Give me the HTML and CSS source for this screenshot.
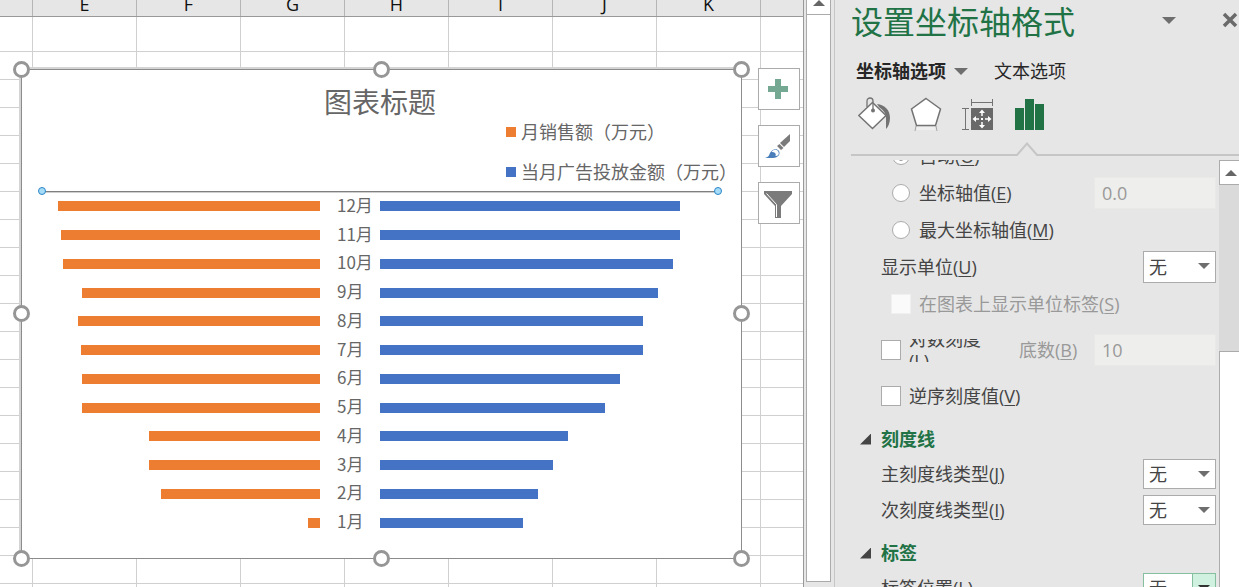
FILE: index.html
```html
<!DOCTYPE html>
<html lang="zh-CN">
<head>
<meta charset="utf-8">
<title>设置坐标轴格式</title>
<link rel="stylesheet" href="styles.css">
</head>
<body>
<div class="app">
  <main class="sheet">
    <div class="columns">
      <span class="col col-first"></span><span class="col">E</span><span class="col">F</span><span class="col">G</span><span class="col">H</span><span class="col">I</span><span class="col">J</span><span class="col">K</span><span class="col-rest"></span>
    </div>
    <div class="first-row"></div>
    <div class="rows"></div>

    <section class="chart">
      <h2 class="chart-title">图表标题</h2>
      <ul class="legend">
        <li><i class="swatch orange"></i>月销售额（万元）</li>
        <li><i class="swatch blue"></i>当月广告投放金额（万元）</li>
      </ul>
      <div class="plot">
        <div class="axis-line"></div>
        <div class="bar-row"><div class="left"><i class="bar orange" style="width:94.2%"></i></div><span>12月</span><div><i class="bar blue" style="width:88.8%"></i></div></div>
        <div class="bar-row"><div class="left"><i class="bar orange" style="width:93.2%"></i></div><span>11月</span><div><i class="bar blue" style="width:88.8%"></i></div></div>
        <div class="bar-row"><div class="left"><i class="bar orange" style="width:92.4%"></i></div><span>10月</span><div><i class="bar blue" style="width:86.7%"></i></div></div>
        <div class="bar-row"><div class="left"><i class="bar orange" style="width:85.6%"></i></div><span>9月</span><div><i class="bar blue" style="width:82.2%"></i></div></div>
        <div class="bar-row"><div class="left"><i class="bar orange" style="width:87%"></i></div><span>8月</span><div><i class="bar blue" style="width:77.8%"></i></div></div>
        <div class="bar-row"><div class="left"><i class="bar orange" style="width:86%"></i></div><span>7月</span><div><i class="bar blue" style="width:77.8%"></i></div></div>
        <div class="bar-row"><div class="left"><i class="bar orange" style="width:85.6%"></i></div><span>6月</span><div><i class="bar blue" style="width:71%"></i></div></div>
        <div class="bar-row"><div class="left"><i class="bar orange" style="width:85.6%"></i></div><span>5月</span><div><i class="bar blue" style="width:66.6%"></i></div></div>
        <div class="bar-row"><div class="left"><i class="bar orange" style="width:61.5%"></i></div><span>4月</span><div><i class="bar blue" style="width:55.6%"></i></div></div>
        <div class="bar-row"><div class="left"><i class="bar orange" style="width:61.5%"></i></div><span>3月</span><div><i class="bar blue" style="width:51.2%"></i></div></div>
        <div class="bar-row"><div class="left"><i class="bar orange" style="width:57.2%"></i></div><span>2月</span><div><i class="bar blue" style="width:46.7%"></i></div></div>
        <div class="bar-row"><div class="left"><i class="bar orange" style="width:4.3%"></i></div><span>1月</span><div><i class="bar blue" style="width:42.3%"></i></div></div>
      </div>
      <i class="handle n w"></i><i class="handle n c"></i><i class="handle n e"></i>
      <i class="handle m w"></i><i class="handle m e"></i>
      <i class="handle s w"></i><i class="handle s c"></i><i class="handle s e"></i>
    </section>

    <div class="chart-tools">
      <button type="button" aria-label="图表元素"><svg width="40" height="40" viewBox="0 0 40 40"><path fill="#74a892" d="M16 10h6v7h7v6h-7v7h-6v-7H9v-6h7z"/></svg></button>
      <button type="button" aria-label="图表样式"><svg width="40" height="40" viewBox="0 0 40 40"><path fill="#7b7b7b" d="M31 8v7l-6 6-4-4z"/><path fill="#7b7b7b" d="M20.500 18l4 4-2.500 2-4-4z"/><path fill="#4a7ebb" d="M6 32c4-1 4-3 5-5 2-4 7-5 9-2 2 4-2 7-6 7z"/><path fill="#fff" d="M12.500 26c2-3 6-3 7 0s-1 4-3 4c1-3-1-4-4-4z"/></svg></button>
      <button type="button" aria-label="图表筛选器"><svg width="40" height="40" viewBox="0 0 40 40"><path fill="#7b7b7b" d="M5 8h28v3L22 23v12h-6V23L5 11z"/><path fill="none" stroke="#fff" d="M7.500 10.500l10 11V34"/></svg></button>
    </div>
  </main>

  <div class="sheet-scroll">
    <button type="button" class="sheet-up" aria-label="向上滚动"><i class="tri-up"></i></button>
    <div class="sheet-thumb"></div>
  </div>

  <aside class="pane">
    <header class="pane-head">
      <h1>设置坐标轴格式</h1>
      <button type="button" class="plain" aria-label="任务窗格选项"><i class="tri-down"></i></button>
      <button type="button" class="plain close" aria-label="关闭"><svg width="16" height="16" viewBox="0 0 16 16"><path d="M2 2l12 12M14 2L2 14" stroke="#6a6a6a" stroke-width="3.500" fill="none"/></svg></button>
    </header>
    <nav class="tabs">
      <button type="button" class="plain active">坐标轴选项<i class="tri-down"></i></button>
      <button type="button" class="plain">文本选项</button>
    </nav>
    <div class="icon-tabs">
      <button type="button" class="plain" aria-label="填充与线条"><svg width="32" height="34" viewBox="0 0 32 34"><path fill="#737373" d="M19 7c8 1 13 6 13 14 0 5-2 9-4 11V21c0-5-3-8-7-11z"/><path d="M14.500 5.500L28 18.500 14.500 31.500.8 18.500z" fill="#fff" stroke="#737373" stroke-width="1.500"/><path d="M9 10V4c0-4 6-4 6 0v9" fill="none" stroke="#737373" stroke-width="1.300"/><circle cx="15" cy="13.500" r="2" fill="#737373"/></svg></button>
      <button type="button" class="plain" aria-label="效果"><svg width="32" height="34" viewBox="0 0 32 34"><path fill="#efefef" d="M7 30h18v3H7z"/><path d="M6 29l-1 5M26 29l1 5" stroke="#a5a5a5"/><path d="M16 1.500L30.500 12 25.500 28.500h-19L1.500 12z" fill="#fff" stroke="#737373" stroke-width="1.500"/></svg></button>
      <button type="button" class="plain" aria-label="大小与属性"><svg width="32" height="34" viewBox="0 0 32 34"><path fill="#696969" d="M9 11h22v22H9z"/><path d="M9.500 2v7M30.500 2v7M9.500 5.500h21M0 11.500h7M0 32.500h7M3.500 11.500v21" stroke="#737373" fill="none"/><path d="M20 14v5M20 25v5M12 22h5M23 22h5" stroke="#fff" stroke-width="1.500"/><path fill="#fff" d="M20 12.500l3 3.500h-6zM20 31.500l3-3.500h-6zM10.500 22l3.500-3v6zM29.500 22L26 19v6zM19 21h2v2h-2z"/></svg></button>
      <button type="button" class="plain current" aria-label="坐标轴选项"><svg width="32" height="34" viewBox="0 0 32 34"><path fill="#217346" d="M1 11h9v22H1zM11 2h9v31h-9zM21 7h9v26h-9z"/></svg><svg class="notch" width="24" height="14" viewBox="0 0 24 14"><path d="M1 13L12 1.500 23 13v1H1z" fill="#e6e6e6"/><path d="M0 13h2L12 1.500 22 13h2" fill="none" stroke="#c6c6c6" stroke-width="2"/></svg></button>
    </div>
    <div class="pane-body">
      <form class="options">
        <div class="opt indent"><input type="radio" name="cross" id="o1" checked><label for="o1">自动(<u>O</u>)</label></div>
        <div class="opt indent"><input type="radio" name="cross" id="o2"><label for="o2">坐标轴值(<u>E</u>)</label><input type="text" class="field" value="0.0" aria-label="坐标轴值" disabled></div>
        <div class="opt indent"><input type="radio" name="cross" id="o3"><label for="o3">最大坐标轴值(<u>M</u>)</label></div>
        <div class="opt"><label for="unit">显示单位(<u>U</u>)</label><span class="select"><select id="unit"><option>无</option></select></span></div>
        <div class="opt indent off"><input type="checkbox" id="o4" disabled><label for="o4">在图表上显示单位标签(<u>S</u>)</label></div>
        <div class="opt log"><input type="checkbox" id="o5"><label for="o5" class="clipped"><span>对数刻度 (<u>L</u>)</span></label><label for="base" class="base">底数(<u>B</u>)</label><input type="text" class="field" id="base" value="10" disabled></div>
        <div class="opt"><input type="checkbox" id="o6"><label for="o6">逆序刻度值(<u>V</u>)</label></div>
        <h3>刻度线</h3>
        <div class="opt"><label for="major">主刻度线类型(<u>J</u>)</label><span class="select"><select id="major"><option>无</option></select></span></div>
        <div class="opt"><label for="minor">次刻度线类型(<u>I</u>)</label><span class="select"><select id="minor"><option>无</option></select></span></div>
        <h3>标签</h3>
        <div class="opt"><label for="pos">标签位置(<u>L</u>)</label><span class="select hot"><select id="pos"><option>无</option></select></span></div>
      </form>
      <div class="pane-scroll">
        <button type="button" class="pane-up" aria-label="向上滚动"><i class="tri-up"></i></button>
        <div class="pane-thumb"></div>
      </div>
    </div>
  </aside>
</div>
</body>
</html>
```
FILE: styles.css
```css
*, *::before, *::after { box-sizing: border-box; }
body {
  margin: 0;
  font: 18px/24px "Open Sans", "Noto Sans CJK SC", sans-serif;
  color: #444;
  background: #e6e6e6;
}
h1, h2, h3, ul { margin: 0; padding: 0; font-weight: 400; }
button, input, select { font: inherit; color: inherit; margin: 0; }
.app { display: flex; height: 100vh; overflow: hidden; }

/* worksheet */
.sheet { position: relative; flex: 1; min-width: 0; display: flex; flex-direction: column; background: #fff; border-right: 1px solid #999; overflow: hidden; }
.columns { display: flex; height: 17px; background: #e6e6e6; border-bottom: 1px solid #999; flex: none; overflow: hidden; }
.col { display: flex; align-items: flex-end; justify-content: center; flex: 0 0 104px; border-right: 1px solid #b5b5b5; color: #111; line-height: 24px; }
.col-first { flex-basis: 33px; }
.first-row, .rows { background-repeat: repeat-x, repeat; background-size: 104px 100%, 28px 28px; background-position: 32px 0, 0 0; }
.first-row { flex: none; height: 35px; border-bottom: 1px solid #d0d0d0; background-image: linear-gradient(90deg, #d0d0d0 1px, transparent 1px); }
.rows { flex: 1; background-image: linear-gradient(90deg, #d0d0d0 1px, transparent 1px), linear-gradient(transparent 27px, #d0d0d0 27px); }

/* chart object */
.chart { position: absolute; left: 21px; right: 61px; top: 69px; padding: 15px 23px 21px 20px; background: #fff; border: 1px solid #8c8c8c; box-shadow: -1px -1px 0 1px #d4d4d4; color: #666; font-family: "Noto Sans CJK SC", sans-serif; }
.chart-title { font-size: 28px; line-height: 32px; text-align: center; }
.legend { list-style: none; width: 212px; margin: 0 0 0 auto; white-space: nowrap; }
.legend li { display: flex; align-items: center; gap: 5px; height: 40px; margin-top: -6px; }
.legend li + li { margin-top: 0; }
.swatch { width: 10px; height: 10px; margin-top: 2px; flex: none; }
.orange { background: #ed7d31; }
.blue { background: #4472c4; }
.plot { display: grid; grid-template-rows: 1px repeat(12, 1fr); height: 346px; }
.axis-line { position: relative; background: #7f7f7f; box-shadow: 0 1px #cfcfcf; }
.axis-line::before, .axis-line::after { content: ""; position: absolute; top: -4px; width: 8px; height: 8px; border: 1px solid #2e86c8; border-radius: 50%; background: #a5dcf7; }
.axis-line::before { left: -4px; }
.axis-line::after { right: -4px; }
.bar-row { display: grid; grid-template-columns: 278fr 60px 338fr; align-items: center; font-size: 17px; line-height: 24px; }
.bar-row span { padding: 0 0 3px 17px; }
.left { display: flex; justify-content: flex-end; }
.bar { display: block; height: 10px; }
.handle { position: absolute; width: 17px; height: 17px; border: 3px solid #969696; border-radius: 50%; background: #fff; }
.n { top: -9px; } .s { bottom: -9px; } .m { top: calc(50% - 9px); }
.w { left: -9px; } .e { right: -9px; } .c { left: calc(50% - 9px); }
.chart-tools { position: absolute; right: 3px; top: 68px; display: flex; flex-direction: column; gap: 15px; }
.chart-tools button { width: 42px; height: 42px; padding: 0; border: 1px solid #ababab; background: #fff; }
svg { display: block; }

/* worksheet scroll bar */
.sheet-scroll { width: 31px; padding: 0 3px 5px 2px; display: flex; flex-direction: column; border-right: 1px solid #c6c6c6; }
.sheet-up { height: 15px; border: 1px solid #ababab; border-top: 0; background: #fff; padding: 0 0 10px; display: grid; place-items: center; }
.sheet-thumb { flex: 1; border: 1px solid #ababab; border-top: 0; background: #fff; }
.tri-up, .tri-down { display: block; width: 0; border: 6px solid transparent; }
.tri-up { border-top: 0; border-bottom-color: #666; }
.tri-down { border-width: 7px; border-bottom: 0; border-top-color: #6e6e6e; }

/* task pane */
.pane { width: 404px; flex: none; display: flex; flex-direction: column; }
.plain { border: 0; background: none; padding: 0; }
.pane-head { display: flex; align-items: center; height: 48px; padding: 0 1px 8px 16px; }
.pane-head h1 { flex: 1; font-size: 32px; line-height: 40px; color: #217346; padding-top: 4px; }
.close { margin-left: 46px; }
.tabs { display: flex; gap: 26px; padding: 10px 0 0 21px; color: #262626; }
.tabs .plain { display: flex; align-items: center; gap: 8px; height: 26px; }
.tabs .active { font-weight: 700; }
.icon-tabs { display: flex; gap: 20px; padding: 13px 0 23px 7px; margin: 0 0 4px 16px; border-bottom: 2px solid #c6c6c6; }
.current { position: relative; }
.notch { position: absolute; left: 1px; top: 45px; }
.pane-body { flex: 1; min-height: 0; display: flex; overflow: hidden; }
.options { flex: 1; margin-top: -23px; padding: 0 3px 0 46px; }
.opt { display: flex; align-items: center; height: 36px; gap: 8px; white-space: nowrap; }
.opt:nth-child(-n+5) { height: 37px; }
.opt.log { height: 56px; }
.indent { padding-left: 10px; }
u { text-decoration-thickness: 1px; text-underline-offset: 2px; }
input[type="radio"], input[type="checkbox"] { appearance: none; width: 20px; height: 20px; background: #fff; border: 1px solid #ababab; flex: none; }
input[type="radio"] { width: 18px; height: 18px; margin: 0 1px; border-radius: 50%; }
input[type="radio"]:checked { background: radial-gradient(#444 0 4px, #fff 5px); }
input[type="checkbox"]:disabled { border-color: #f0f0f0; background: #fafafa; }
.off, .base { color: #999; }
.field { width: 122px; height: 32px; margin-left: auto; padding: 0 7px; border: 1px solid #e9e9e7; background: #eeeeec; color: #999; }
.clipped { width: 80px; height: 23px; display: grid; align-content: center; overflow: hidden; white-space: normal; line-height: 22px; }
.base { margin-left: 22px; }
h3 { display: flex; align-items: center; height: 34px; margin: 8px 0 0 -21px; gap: 10px; font-size: 18px; font-weight: 700; color: #217346; }
h3::before { content: ""; width: 11px; height: 11px; background: #444; clip-path: polygon(100% 0, 100% 100%, 0 100%); }
.select { position: relative; width: 73px; margin-left: auto; }
.select select { display: block; appearance: none; width: 100%; height: 30px; padding: 0 5px; border: 1px solid #ababab; border-radius: 0; background: #fff; }
.select #unit { height: 32px; }
.select::after { content: ""; position: absolute; right: 6px; top: 12px; border: 6px solid transparent; border-bottom: 0; border-top-color: #6e6e6e; pointer-events: none; }
.hot select { border-color: #86bfa0; background: linear-gradient(90deg, #fff 48px, #86bfa0 48px 49px, #d0f0e0 49px); }
.hot::after { border-top-color: #333; }
.pane-scroll { width: 20px; display: flex; flex-direction: column; background: #dadada; }
.pane-up { height: 25px; margin-bottom: 166px; padding: 0 0 0 3px; border: 1px solid #ababab; border-right: 0; background: #fff; display: grid; place-items: center; }
.pane-thumb { flex: 1; background: #fff; border: solid #ababab; border-width: 1px 0 0 1px; }
```
